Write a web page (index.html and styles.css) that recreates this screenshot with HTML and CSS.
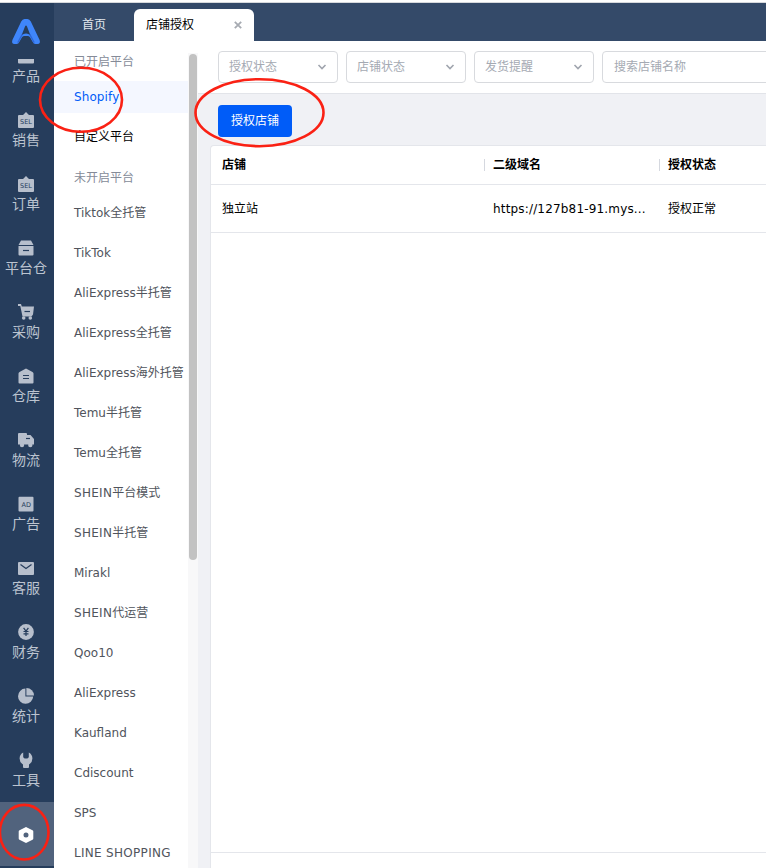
FILE: index.html
```html
<!DOCTYPE html>
<html lang="zh-CN">
<head>
<meta charset="utf-8">
<title>店铺授权</title>
<link rel="stylesheet" href="styles.css">
</head>
<body>
<div class="app">
  <aside class="rail">
    <div class="logo">
      <svg width="30" height="27" viewBox="0 0 30 27">
        <path d="M10.2 3.6Q11.5 1 13.5 1H16.5Q18.5 1 19.8 3.6L28.6 22Q29.8 26 26.5 26H24.4Q22.6 26 21.6 23.8L19 19.2Q18 18 16.8 18H13.2Q12 18 11 19.2L8.4 23.8Q7.4 26 5.6 26H3.5Q.2 26 1.4 22ZM15 7.6Q14.4 7.6 14 8.6L10.6 17.2Q12.6 15.6 15 15.6Q17.4 15.6 19.4 17.2L16 8.6Q15.6 7.6 15 7.6Z" fill="#3f86fb" fill-rule="evenodd"/>
        <path d="M11.2 16.4L6.8 24.6M18.8 16.4L23.2 24.6" fill="none" stroke="#2c66d8" stroke-width="1.2"/>
      </svg>
    </div>
    <nav class="nav">
      <a class="nav-item"><svg class="ico" viewBox="0 0 16 16"><rect y="3" width="16" height="12.6" rx="1"/></svg><span>产品</span></a>
      <a class="nav-item"><svg class="ico" viewBox="0 0 16 16"><path d="M1 3H5L8 0L11 3H15Q16 3 16 4V15Q16 16 15 16H1Q0 16 0 15V4Q0 3 1 3Z"/><text x="8" y="11.6" class="glyph">SEL</text></svg><span>销售</span></a>
      <a class="nav-item"><svg class="ico" viewBox="0 0 16 16"><path d="M1 3H5L8 0L11 3H15Q16 3 16 4V15Q16 16 15 16H1Q0 16 0 15V4Q0 3 1 3Z"/><text x="8" y="11.6" class="glyph">SEL</text></svg><span>订单</span></a>
      <a class="nav-item"><svg class="ico" viewBox="0 0 16 16"><path d="M3 .5H13L15.5 5H.5ZM.5 6H15.5V14.5Q15.5 15.5 14.5 15.5H1.5Q.5 15.5 .5 14.5Z"/><path class="cut" d="M5 10.5H11"/></svg><span>平台仓</span></a>
      <a class="nav-item"><svg class="ico" viewBox="0 0 16 16"><path d="M0 0H3L3.8 2.5H16L15 10.5L13.5 12.4H4.5L2.3 2H0Z"/><circle cx="5.7" cy="14" r="1.8"/><circle cx="12.3" cy="14" r="1.8"/><path class="cut" d="M6.5 7.5H12"/></svg><span>采购</span></a>
      <a class="nav-item"><svg class="ico" viewBox="0 0 16 16"><path d="M8 .5L14.5 4Q15.5 4.5 15.5 5.5V14.5Q15.5 15.5 14.5 15.5H1.5Q.5 15.5 .5 14.5V5.5Q.5 4.5 1.5 4Z"/><path class="cut" d="M5 7.5H11M5 10.5H11"/></svg><span>仓库</span></a>
      <a class="nav-item"><svg class="ico" viewBox="0 0 16 16"><path d="M1 1H8Q9 1 9 2V3H12.5L16 7V12.6H0V2Q0 1 1 1Z"/><circle cx="4" cy="13" r="2.2"/><circle cx="12.3" cy="13" r="2.2"/><path class="cut" d="M8 6.5H12"/></svg><span>物流</span></a>
      <a class="nav-item"><svg class="ico" viewBox="0 0 16 16"><rect x=".5" y=".8" width="15" height="14.7" rx="1"/><text x="8.2" y="10.8" class="glyph">AD</text></svg><span>广告</span></a>
      <a class="nav-item"><svg class="ico" viewBox="0 0 16 16"><rect x="0" y="2" width="16" height="13" rx="1"/><path class="cut" d="M2.5 4.5L8 8.5L13.5 4.5"/></svg><span>客服</span></a>
      <a class="nav-item"><svg class="ico" viewBox="0 0 16 16"><circle cx="8" cy="8" r="7.9"/><path class="cut" d="M5.6 3.8L8 7.2L10.4 3.8M8 7V12M5.5 7.5H10.5M5.5 9.8H10.5"/></svg><span>财务</span></a>
      <a class="nav-item"><svg class="ico" viewBox="0 0 16 16"><path d="M7.4 .6V8.6H15.2A7.6 7.6 0 1 1 7.4 .6Z"/><path d="M8.4 0A7.5 7.5 0 0 1 16 7.6H8.4Z"/></svg><span>统计</span></a>
      <a class="nav-item"><svg class="ico" viewBox="0 0 16 16"><path d="M5.2 .4V5.2L6.6 6.4H9.4L10.8 5.2V.4A6.9 6.9 0 0 1 11 12.4V15Q11 16 10 16H6Q5 16 5 15V12.4A6.9 6.9 0 0 1 5.2 .4Z"/></svg><span>工具</span></a>
      <a class="nav-item active"><svg class="ico" viewBox="0 0 16 16"><path fill-rule="evenodd" d="M8 0L14.5 3.2Q15.3 3.7 15.3 4.6V11.4Q15.3 12.3 14.5 12.8L8 16L1.5 12.8Q.7 12.3 .7 11.4V4.6Q.7 3.7 1.5 3.2ZM8 5.5A2.5 2.5 0 1 0 8 10.5A2.5 2.5 0 1 0 8 5.5Z"/></svg></a>
    </nav>
  </aside>

  <div class="workspace">
    <header class="tabs">
      <div class="tab">首页</div>
      <div class="tab current">店铺授权<svg class="close" viewBox="0 0 8 8"><path d="M.8 .8L7.2 7.2M7.2 .8L.8 7.2"/></svg></div>
    </header>

    <div class="body">
      <div class="platforms">
        <div class="list">
          <h3>已开启平台</h3>
          <div class="item selected">Shopify</div>
          <div class="item own">自定义平台</div>
          <h3>未开启平台</h3>
          <div class="item">Tiktok全托管</div>
          <div class="item">TikTok</div>
          <div class="item">AliExpress半托管</div>
          <div class="item">AliExpress全托管</div>
          <div class="item">AliExpress海外托管</div>
          <div class="item">Temu半托管</div>
          <div class="item">Temu全托管</div>
          <div class="item"><span class="caps">SHEIN</span>平台模式</div>
          <div class="item"><span class="caps">SHEIN</span>半托管</div>
          <div class="item">Mirakl</div>
          <div class="item"><span class="caps">SHEIN</span>代运营</div>
          <div class="item">Qoo10</div>
          <div class="item">AliExpress</div>
          <div class="item">Kaufland</div>
          <div class="item">Cdiscount</div>
          <div class="item">SPS</div>
          <div class="item"><span class="caps">LINE SHOPPING</span></div>
        </div>
        <div class="scrollbar"><div class="thumb"></div></div>
      </div>

      <main class="main">
        <div class="filters">
          <div class="select">授权状态<svg class="chev" viewBox="0 0 10 6"><path d="M1.5 1L5 4.5L8.5 1"/></svg></div>
          <div class="select">店铺状态<svg class="chev" viewBox="0 0 10 6"><path d="M1.5 1L5 4.5L8.5 1"/></svg></div>
          <div class="select">发货提醒<svg class="chev" viewBox="0 0 10 6"><path d="M1.5 1L5 4.5L8.5 1"/></svg></div>
          <div class="select search">搜索店铺名称</div>
        </div>
        <div class="toolbar"><button class="primary">授权店铺</button></div>
        <section class="table">
          <div class="row head"><div>店铺</div><div class="split">二级域名</div><div class="split">授权状态</div></div>
          <div class="row"><div>独立站</div><div class="url">https://127b81-91.mys...</div><div>授权正常</div></div>
          <div class="empty"></div>
          <div class="foot"></div>
        </section>
      </main>
    </div>
  </div>
</div>
<svg class="marks" viewBox="0 0 766 868">
  <ellipse cx="81" cy="99.8" rx="41" ry="32"/>
  <ellipse cx="259.5" cy="112.7" rx="64" ry="33.5"/>
  <ellipse cx="24.2" cy="832.2" rx="24.3" ry="27.3"/>
</svg>
</body>
</html>
```
FILE: styles.css
```css
* { box-sizing: border-box; }

body {
  margin: 0;
  height: 868px;
  overflow: hidden;
  background: #fff;
  font: 12px/32px "DejaVu Sans", "Noto Sans CJK SC", sans-serif;
  color: #000;
}

.app {
  display: flex;
  height: 868px;
  padding-top: 2px;
  overflow: hidden;
}

.rail {
  width: 54px;
  flex: none;
  display: flex;
  flex-direction: column;
  background: #263d5c;
  border-top: 1px solid #d6d9dd;
  overflow: hidden;
}

.logo {
  height: 56px;
  flex: none;
  padding: 15px 0 0 11px;
  line-height: 0;
}

.nav {
  flex: 1;
  min-height: 0;
  overflow: hidden;
}

.nav-item {
  display: flex;
  flex-direction: column;
  align-items: center;
  height: 64px;
  padding-top: 14px;
  font-size: 14px;
  line-height: 22px;
  color: #bcc4d0;
}

.nav-item:first-child { margin-top: -25px; }
.nav-item span { white-space: nowrap; margin-left: -2px; padding-top: 1px; }

.ico {
  width: 16px;
  height: 16px;
  flex: none;
  fill: #b7bfcc;
  margin-left: -2px;
}

.ico .cut { fill: none; stroke: #263d5c; stroke-width: 1.2; }
.glyph { font: 6.5px "DejaVu Sans", sans-serif; fill: #263d5c; text-anchor: middle; }

.active { background: #51637d; padding-top: 25px; }
.active .ico { fill: #fff; }

.workspace {
  flex: 1;
  min-width: 0;
  display: flex;
  flex-direction: column;
}

.tabs {
  display: flex;
  align-items: flex-end;
  height: 39px;
  flex: none;
  background: #344a69;
  border-top: 1px solid #d6d9dd;
}

.tab { width: 80px; text-align: center; color: #e3e7ed; }

.current {
  display: flex;
  align-items: center;
  justify-content: space-between;
  width: 120px;
  padding: 0 12px;
  border-radius: 6px 6px 0 0;
  background: #fff;
  color: #000;
}

.close { width: 8px; height: 8px; fill: none; stroke: #a7abb2; stroke-width: 1.8; }

.body { flex: 1; min-height: 0; display: flex; }

.platforms {
  width: 144px;
  flex: none;
  display: flex;
  overflow: hidden;
}

.list { width: 134px; flex: none; padding-top: 4px; }
.list h3 { height: 32px; margin: 0 0 4px; padding-left: 20px; font-size: 12px; line-height: 34px; font-weight: 400; color: #858b98; }
.item { height: 32px; margin-bottom: 8px; padding-left: 20px; white-space: nowrap; color: #50545c; }
.selected { background: #f4f7ff; color: #005cf8; letter-spacing: .1px; }
.own { color: #000; }
.caps { letter-spacing: .3px; }

.scrollbar { flex: 1; margin-top: 12px; padding: 1px 1px 0; background: #f8f8f9; }
.thumb { height: 506px; border-radius: 4px; background: #c2c2c2; }

.main {
  flex: 1;
  min-width: 0;
  display: flex;
  flex-direction: column;
  background: #f0f1f5;
}

.filters {
  display: flex;
  gap: 8px;
  height: 53px;
  flex: none;
  padding: 10px 0 0 20px;
  overflow: hidden;
  background: #fff;
  border-bottom: 1px solid #e2e4e9;
}

.select {
  display: flex;
  align-items: center;
  justify-content: space-between;
  width: 120px;
  height: 32px;
  flex: none;
  padding: 0 10px;
  border: 1px solid #d8dade;
  border-radius: 4px;
  line-height: 30px;
  color: #a5aab3;
}

.search { width: 240px; padding-left: 11px; }
.chev { width: 10px; height: 6px; fill: none; stroke: #a0a5ae; stroke-width: 1.6; }

.toolbar { height: 51px; flex: none; padding: 11px 0 0 20px; }

.primary {
  display: block;
  width: 74px;
  height: 32px;
  padding: 0;
  border: 0;
  border-radius: 4px;
  background: #005cf8;
  color: #fff;
  font: inherit;
}

.table {
  flex: 1;
  min-height: 0;
  display: flex;
  flex-direction: column;
  margin-left: 12px;
  border: 1px solid #e4e6eb;
  border-width: 1px 0 0 1px;
  border-radius: 4px 0 0 0;
  background: #fff;
}

.row {
  display: grid;
  grid-template-columns: 271px 175px 1fr;
  align-items: center;
  height: 48px;
  flex: none;
  padding-left: 11px;
  border-bottom: 1px solid #e4e6eb;
  white-space: nowrap;
}

.head { height: 39px; font-weight: 700; }
.url { letter-spacing: .17px; }
.split { margin-left: -9px; padding-left: 8px; border-left: 1px solid #d5d8df; line-height: 12px; }
.empty { flex: 1; }
.foot { height: 16px; flex: none; border-top: 1px solid #e4e6eb; }

.marks {
  position: absolute;
  inset: 0;
  width: 766px;
  height: 868px;
  fill: none;
  stroke: #fa2114;
  stroke-width: 2.6;
  pointer-events: none;
}
```
